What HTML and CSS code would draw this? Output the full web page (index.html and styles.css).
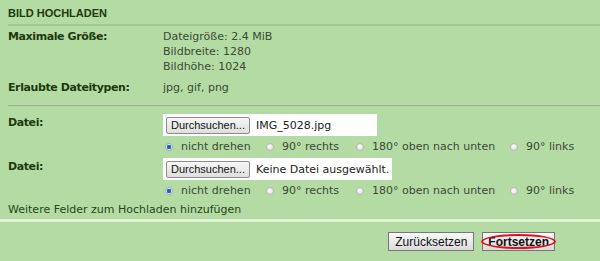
FILE: index.html
```html
<!DOCTYPE html>
<html lang="de">
  <head>
    <meta charset="UTF-8" />
    <meta name="viewport" content="width=device-width, initial-scale=1.0" />
    <title>Bild hochladen</title>
    <link rel="stylesheet" href="styles.css">
  </head>

  <body>
    <form class="upload">
      <h3 class="title">BILD HOCHLADEN</h3>

      <div class="info">
        <div class="row">
          <span class="label">Maximale Größe:</span>
          <div class="value">
            <div>Dateigröße: 2.4 MiB</div>
            <div>Bildbreite: 1280</div>
            <div>Bildhöhe: 1024</div>
          </div>
        </div>
        <div class="row">
          <span class="label">Erlaubte Dateitypen:</span>
          <div class="value">jpg, gif, png</div>
        </div>
      </div>

      <div class="files">
        <div class="row file-row">
          <span class="label">Datei:</span>
          <div class="value">
            <div class="file">
              <button type="button" class="browse">Durchsuchen...</button>
              <span class="file-name">IMG_5028.jpg</span>
            </div>
            <div class="rotate">
              <label><span class="radio checked"></span>nicht drehen</label>
              <label><span class="radio"></span>90° rechts</label>
              <label><span class="radio"></span>180° oben nach unten</label>
              <label><span class="radio"></span>90° links</label>
            </div>
          </div>
        </div>

        <div class="row file-row">
          <span class="label">Datei:</span>
          <div class="value">
            <div class="file">
              <button type="button" class="browse">Durchsuchen...</button>
              <span class="file-name">Keine Datei ausgewählt.</span>
            </div>
            <div class="rotate">
              <label><span class="radio checked"></span>nicht drehen</label>
              <label><span class="radio"></span>90° rechts</label>
              <label><span class="radio"></span>180° oben nach unten</label>
              <label><span class="radio"></span>90° links</label>
            </div>
          </div>
        </div>

        <a class="more">Weitere Felder zum Hochladen hinzufügen</a>
      </div>

      <div class="actions">
        <button type="reset" class="btn">Zurücksetzen</button>
        <button type="submit" class="btn btn-main">Fortsetzen</button>
      </div>
    </form>
  </body>
</html>
```

FILE: styles.css
```css
body {
  margin: 0;
  padding: 0;
  background-color: #b5dba5;
  font-family: "DejaVu Sans", Verdana, sans-serif;
  font-size: 11px;
  color: #3a4a34;
}

.title {
  margin: 0 0 0 8px;
  padding: 7px 0 4px;
  font-family: "Liberation Sans", Arial, sans-serif;
  font-size: 11px;
  line-height: 13px;
  color: #1c3a0c;
  border-bottom: 2px solid #9fc790;
}

.info {
  margin-left: 8px;
  padding: 3px 0 10px;
  border-bottom: 1px solid #a0ae98;
}

.row {
  display: grid;
  grid-template-columns: 155px 1fr;
  line-height: 15px;
  margin-top: 6px;
}

.row:first-child {
  margin-top: 0;
}

.label {
  font-weight: bold;
  letter-spacing: -0.4px;
  color: #1c3a0c;
}

.files {
  margin-left: 8px;
  padding-top: 8px;
}

.file-row {
  margin-top: 0;
  margin-bottom: 4px;
}

.file-row + .file-row {
  margin-top: 4px;
}

.file-row .label {
  padding-top: 1px;
}

.file {
  display: flex;
  align-items: center;
  width: max-content;
  min-width: 214px;
  height: 22px;
  box-sizing: border-box;
  background-color: #fff;
  padding: 0 3px;
}

.browse {
  width: 84px;
  height: 17px;
  padding: 0;
  margin-right: 6px;
  font-family: "Liberation Sans", Tahoma, sans-serif;
  font-size: 11px;
  color: #111;
  white-space: nowrap;
  overflow: hidden;
  border: 1px solid #8c8c8c;
  border-radius: 2px;
  background: linear-gradient(#f7f7f7, #dedede);
}

.file-name {
  color: #222;
}

.rotate {
  display: grid;
  grid-template-columns: 101px 90px 154px auto;
  padding-left: 2px;
  margin-top: 3px;
}

.rotate label {
  display: flex;
  align-items: center;
}

.radio {
  width: 8px;
  height: 8px;
  margin-right: 8px;
  border-radius: 50%;
  border: 1px solid #b8b8b8;
  background: radial-gradient(circle at 40% 40%, #fdfdfd, #d4d4d4);
  box-sizing: border-box;
}

.radio.checked {
  border-color: #9aa7b4;
  background: radial-gradient(circle, #1f62b6 0 2px, #eef3f8 2.5px);
}

.more {
  display: block;
  padding: 0 0 2px;
  line-height: 15px;
  color: #24461a;
}

.actions {
  display: flex;
  justify-content: flex-end;
  gap: 8px;
  padding: 10px 45px 0 0;
  border-top: 3px solid #dff3d5;
}

.btn {
  position: relative;
  height: 19px;
  padding: 0 6px;
  font-family: "Liberation Sans", Tahoma, sans-serif;
  font-size: 12px;
  color: #111;
  border: 1px solid #767676;
  background: linear-gradient(#f8f8f8, #dcdcdc);
}

.btn-main {
  font-weight: bold;
  padding: 0 5px;
}

/* roter Kreis um den Weiter-Button */
.btn-main::after {
  content: "";
  position: absolute;
  left: -2px;
  right: -2px;
  top: 1px;
  bottom: 1px;
  border: 2px solid #e2101c;
  border-radius: 50%;
}
```
